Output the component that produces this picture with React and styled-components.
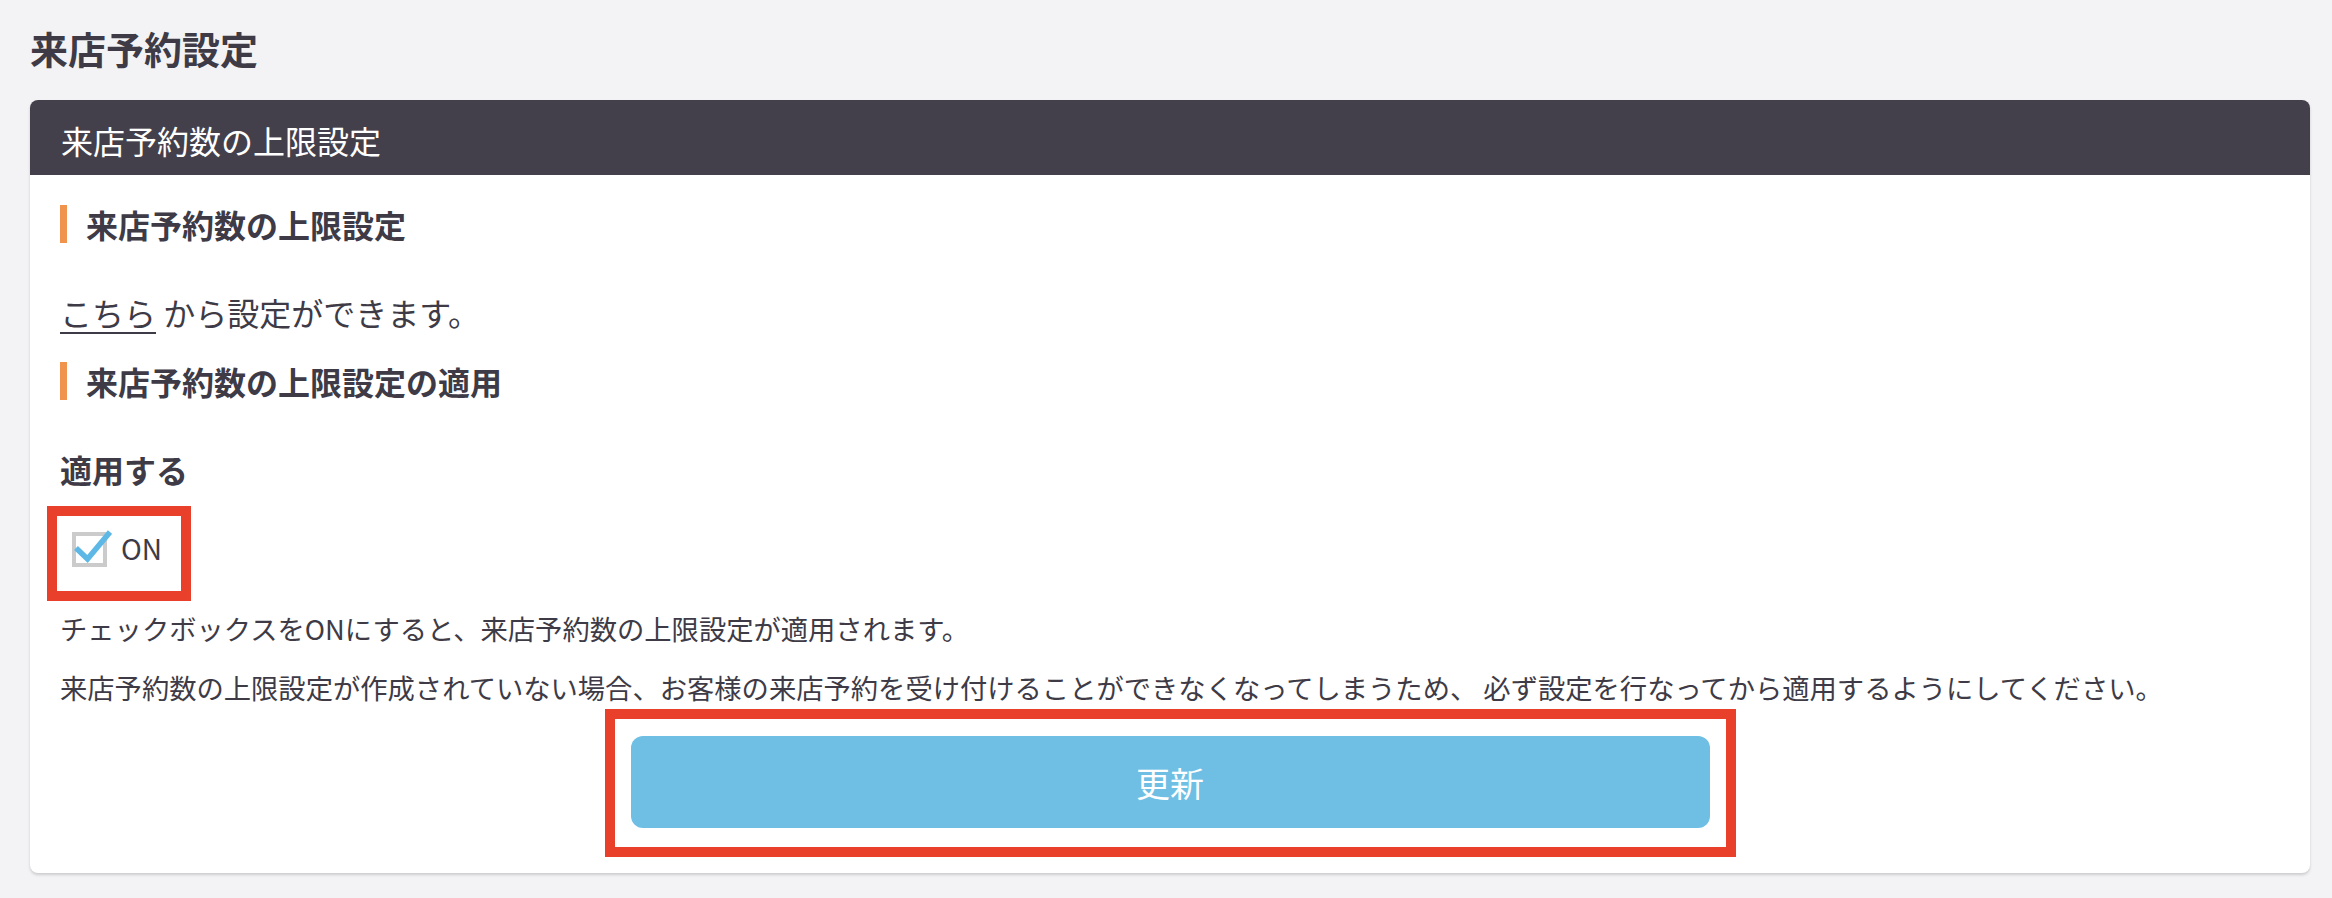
import { createGlobalStyle, styled } from 'styled-components'

const GlobalStyle = createGlobalStyle`
  body {
    margin: 0;
    background: #f3f3f5;
    font-family: "Noto Sans CJK JP", "Noto Sans", sans-serif;
    color: #3e3b46;
  }
`

const Page = styled.div`
  padding: 0 22px 25px 30px;
`

const PageTitle = styled.h1`
  margin: 0 0 26px;
  padding-top: 21px;
  font-size: 38px;
  line-height: 53px;
  font-weight: 700;
`

const Card = styled.section`
  background: #fff;
  border-radius: 8px;
  box-shadow: 0 2px 3px rgba(0, 0, 0, 0.16);
  overflow: hidden;
`

const CardHeader = styled.header`
  display: flex;
  align-items: center;
  height: 75px;
  padding: 4px 31px 0;
  box-sizing: border-box;
  background: #44404b;
  color: #fff;
  font-size: 32px;
`

const CardBody = styled.div`
  padding: 30px 30px 16px;
`

const SectionHeading = styled.h2`
  margin: ${({ $top }) => $top || 0}px 0 0;
  padding-left: 19px;
  border-left: 7px solid #f0944d;
  font-size: 32px;
  line-height: 38px;
  font-weight: 700;
`

const Lead = styled.p`
  margin: 45px 0 0;
  font-size: 32px;
  line-height: 48px;
`

const TextLink = styled.a`
  color: inherit;
  text-decoration: underline;
  text-decoration-thickness: 2px;
  text-underline-offset: 6px;
  cursor: pointer;
`

const FieldLabel = styled.div`
  margin-top: 45px;
  font-size: 32px;
  line-height: 48px;
  font-weight: 700;
`

const CheckFrame = styled.label`
  display: flex;
  align-items: center;
  gap: 9px;
  width: fit-content;
  margin: 13px 0 0 -13px;
  padding: 12px 19px 23px 15px;
  border: 10px solid #e8402a;
  font-size: 28px;
  line-height: 40px;
  cursor: pointer;
`

const Note = styled.p`
  margin: ${({ $top }) => $top}px 0 0;
  font-size: 27.3px;
  line-height: 40px;
`

const ButtonFrame = styled.div`
  width: fit-content;
  margin: 2px auto 0;
  padding: 17px 16px 19px;
  border: 10px solid #e8402a;
`

const SubmitButton = styled.button`
  display: block;
  width: 1079px;
  height: 92px;
  border: none;
  border-radius: 12px;
  background: #6fbfe4;
  color: #fff;
  font-family: inherit;
  font-size: 34px;
  cursor: pointer;
`

const CheckIcon = () => (
  <svg width="40" height="40" viewBox="0 0 40 40">
    <rect x="2" y="6" width="31" height="31" fill="#fff" stroke="#cbcbcb" strokeWidth="4" />
    <path d="M4 20 L15.5 31 L38 4" fill="none" stroke="#5db8e6" strokeWidth="5.5" strokeLinejoin="miter" />
  </svg>
)

const App = () => (
  <>
    <GlobalStyle />
    <Page>
      <PageTitle>来店予約設定</PageTitle>
      <Card>
        <CardHeader>来店予約数の上限設定</CardHeader>
        <CardBody>
          <SectionHeading>来店予約数の上限設定</SectionHeading>
          <Lead>
            <TextLink>こちら</TextLink> から設定ができます。
          </Lead>
          <SectionHeading $top={26}>来店予約数の上限設定の適用</SectionHeading>
          <FieldLabel>適用する</FieldLabel>
          <CheckFrame>
            <CheckIcon />
            ON
          </CheckFrame>
          <Note $top={7}>チェックボックスをONにすると、来店予約数の上限設定が適用されます。</Note>
          <Note $top={19}>
            来店予約数の上限設定が作成されていない場合、お客様の来店予約を受け付けることができなくなってしまうため、 必ず設定を行なってから適用するようにしてください。
          </Note>
          <ButtonFrame>
            <SubmitButton type="button">更新</SubmitButton>
          </ButtonFrame>
        </CardBody>
      </Card>
    </Page>
  </>
)

export default App
